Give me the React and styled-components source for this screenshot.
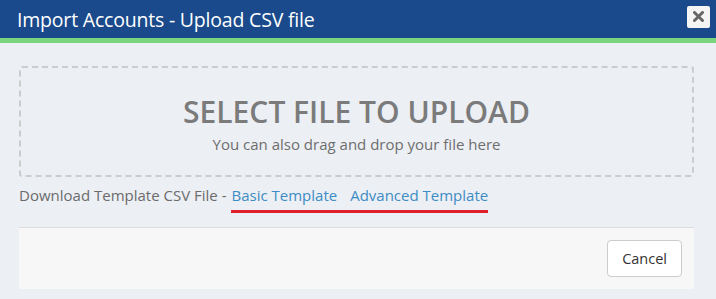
import React from "react"
import styled, { createGlobalStyle } from "styled-components"

const GlobalStyle = createGlobalStyle`
  html, body {
    margin: 0;
    padding: 0;
    background: #eceff4;
    font-family: "Segoe UI", "Open Sans", "Noto Sans", sans-serif;
  }
`

const Modal = styled.div`
  width: 716px;
  height: 299px;
  background: #eceff4;
  display: flex;
  flex-direction: column;
`

const Header = styled.div`
  height: 38px;
  background: #1a4a8b;
  border-bottom: 5px solid #7ad57f;
  display: flex;
  align-items: center;
  justify-content: space-between;
  padding: 0 6px 0 17px;
`

const Title = styled.h1`
  margin: 0;
  font-size: 19.5px;
  font-weight: 400;
  color: #ffffff;
  letter-spacing: -0.2px;
`

const CloseButton = styled.button`
  width: 23px;
  height: 22px;
  padding: 0;
  border: none;
  border-radius: 2px;
  background: #f4f4f4;
  display: flex;
  align-items: center;
  justify-content: center;
  margin-top: -5px;
`

const Body = styled.div`
  padding: 23px 22px 0 19px;
  display: flex;
  flex-direction: column;
`

const DropZone = styled.div`
  height: 107px;
  border: 2px dashed #cccccc;
  border-radius: 3px;
  display: flex;
  flex-direction: column;
  align-items: center;
  justify-content: center;
  color: #7b7b7b;
`

const DropTitle = styled.div`
  font-size: 30px;
  font-weight: 600;
  line-height: 40px;
  margin-top: 3px;
`

const DropHint = styled.div`
  font-size: 15px;
  line-height: 22px;
  margin-top: 1px;
  color: #6e6e6e;
`

const TemplateRow = styled.div`
  margin-top: 8px;
  font-size: 15px;
  line-height: 21px;
  color: #6b6b6b;
  display: flex;
  align-items: flex-start;
`

const Links = styled.div`
  margin-left: 5px;
  display: flex;
  gap: 13px;
  border-bottom: 3px solid #e0202a;
  padding-bottom: 4px;
`

const Link = styled.a`
  color: #3d8cc4;
  text-decoration: none;
`

const Footer = styled.div`
  margin: 14px 22px 0 19px;
  height: 61px;
  background: #f7f7f7;
  border-top: 1px solid #dddddd;
  display: flex;
  align-items: center;
  justify-content: flex-end;
  padding-right: 12px;
`

const Button = styled.button`
  height: 37px;
  padding: 0 14px;
  background: #ffffff;
  border: 1px solid #cccccc;
  border-radius: 4px;
  font-family: inherit;
  font-size: 14.5px;
  color: #333333;
`

function CloseIcon() {
  return (
    <svg width="11" height="11" viewBox="0 0 11 11">
      <path d="M1.5 1.5 L9.5 9.5 M9.5 1.5 L1.5 9.5" stroke="#666" strokeWidth="3" strokeLinecap="round" />
    </svg>
  )
}

export default function App() {
  return (
    <>
      <GlobalStyle />
      <Modal>
        <Header>
          <Title>Import Accounts - Upload CSV file</Title>
          <CloseButton aria-label="Close">
            <CloseIcon />
          </CloseButton>
        </Header>
        <Body>
          <DropZone>
            <DropTitle>SELECT FILE TO UPLOAD</DropTitle>
            <DropHint>You can also drag and drop your file here</DropHint>
          </DropZone>
          <TemplateRow>
            Download Template CSV File -
            <Links>
              <Link href="#">Basic Template</Link>
              <Link href="#">Advanced Template</Link>
            </Links>
          </TemplateRow>
        </Body>
        <Footer>
          <Button>Cancel</Button>
        </Footer>
      </Modal>
    </>
  )
}
